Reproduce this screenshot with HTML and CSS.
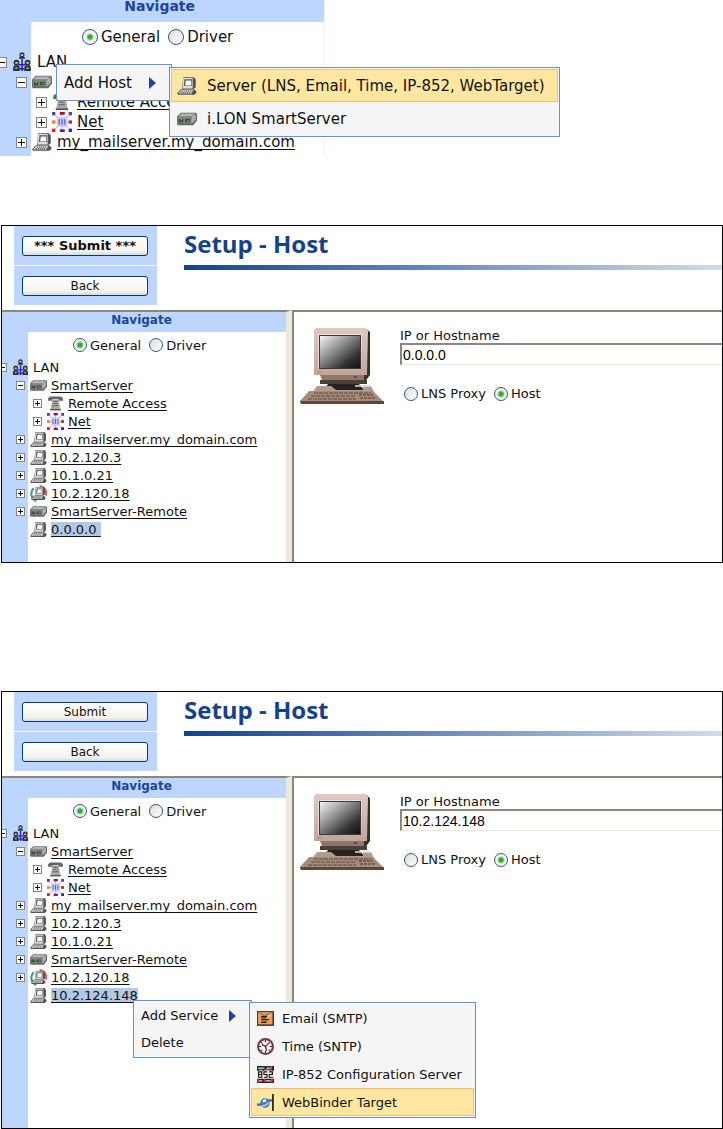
FILE: index.html
```
<!DOCTYPE html>
<html lang="en">
<head>
  <meta charset="UTF-8">
  <meta name="viewport" content="width=device-width, initial-scale=1.0">
  <title>Setup - Host</title>
  <link rel="stylesheet" href="styles.css">
</head>
<body>
  <!-- shared icons -->
  <svg class="sprite" aria-hidden="true">
    <defs>
      <linearGradient id="screen" x1="0" y1="0" x2="1" y2="1">
        <stop offset="0" stop-color="#f4f4f4"/>
        <stop offset="0.3" stop-color="#aaa"/>
        <stop offset="0.75" stop-color="#333"/>
        <stop offset="1" stop-color="#111"/>
      </linearGradient>
      <linearGradient id="bezel" x1="0" y1="0" x2="0" y2="1">
        <stop offset="0" stop-color="#dfcabf"/>
        <stop offset="1" stop-color="#bfa698"/>
      </linearGradient>
    </defs>
    <symbol id="lan" viewBox="0 0 16 18">
      <g fill="#333">
        <circle cx="8" cy="2.5" r="2.3"/><path d="M5 6l1-2h4l1 2z"/>
        <circle cx="3" cy="9.500" r="2.600"/><path d="M0 17v-3l1-2h4l1 2v3z"/>
        <circle cx="13" cy="9.500" r="2.600"/><path d="M10 17v-3l1-2h4l1 2v3z"/>
      </g>
      <path d="M8 6v11M5 11.500h6M6 15h4" stroke="#1a1aff" stroke-width="1.400"/>
      <g fill="#ddd"><rect x="7" y="2" width="2" height="1.500"/><rect x="2" y="9" width="2" height="1.500"/><rect x="12" y="9" width="2" height="1.500"/><rect x="2" y="14" width="2" height="1"/><rect x="12" y="14" width="2" height="1"/></g>
    </symbol>
    <symbol id="server" viewBox="0 0 16 16">
      <path d="M0 6l3-3h12l1 1v5l-3 4H1l-1-1z" fill="#666"/>
      <path d="M1 6l2.500-2.500h11L12 6z" fill="#b4b4b4"/>
      <path d="M.5 6.500H11v5H.5z" fill="#7f857f"/>
      <path d="M11.500 6.500L15 4v4.500l-3.500 3.500z" fill="#b0b0b0"/>
      <path d="M1.500 8H5v2.500H1.500zM6.500 8H10v2.500H6.500z" fill="#2f4f2f"/>
      <path d="M3 8h1v1H3zM8 9h1v1H8z" fill="#7bd07b"/>
    </symbol>
    <symbol id="pc" viewBox="0 0 16 16">
      <path d="M5 1h8.500L15 2.500V9l-2 1.500H4z" fill="#555"/>
      <path d="M5 1.500h7.500v8.500H4.500z" fill="#ddd"/>
      <path d="M6 2.500h6V8H5.500z" fill="#555"/>
      <path d="M7 3.500h4.500v4H6.500z" fill="#f8f8f8"/>
      <path d="M3 10.500h10.500L15.500 12v1.500L14 15H1l-1-1z" fill="#555"/>
      <path d="M3.500 11H13l-1.500 3H1z" fill="#d5d5d5"/>
      <path d="M4 12h7.500M3 13.300h8" stroke="#555" stroke-width=".8" stroke-dasharray="1 .6"/>
    </symbol>
    <symbol id="pc-remote" viewBox="0 0 16 16">
      <path d="M9 1a7 7 0 0 1 6 9" stroke="#ee4b4b" stroke-width="2" fill="none"/>
      <path d="M3.500 3A7.200 7.200 0 0 0 6 15" stroke="#3a9c8c" stroke-width="2" fill="none"/>
      <use href="#pc" x="1" y="1" width="14" height="14"/>
    </symbol>
    <symbol id="phone" viewBox="0 0 16 16">
      <path d="M1 5.500V3l2-1.500h10L15 3v2.500h-4V4H5v1.500z" fill="#666"/>
      <path d="M5 4.500h6l1.500 8.500h-9z" fill="#aaa"/>
      <path d="M6 6h4M6 8h4M5.500 10h5" stroke="#555" stroke-width="1" stroke-dasharray="1 .5"/>
      <path d="M3 13h10v1.500H3z" fill="#555"/>
    </symbol>
    <symbol id="net" viewBox="0 0 18 18">
      <path d="M3 3l12 12M15 3L3 15M9 2v14M2 9h14" stroke="#bbb"/>
      <rect x="4.500" y="4.500" width="9" height="9" rx="2" fill="#c9c9f6"/>
      <path d="M6.500 6.500v5M9 6.500v5M11.500 6.500v5" stroke="#5555ee"/>
      <path d="M0 0h3v3H0z" fill="#5a3ab0"/><path d="M7 0h4.500v2.500H7z" fill="#a0104a"/>
      <path d="M15 0h3v3h-3z" fill="#5a3ad0"/><path d="M0 7.500h3v3H0z" fill="#f08040"/>
      <path d="M15 7.500h3v3h-3z" fill="#d0204a"/><path d="M0 15h3v3H0z" fill="#e02020"/>
      <path d="M7 15.500h4.500V18H7z" fill="#6a20a0"/><path d="M15 15h3v3h-3z" fill="#2222dd"/>
    </symbol>
    <symbol id="email" viewBox="0 0 16 16">
      <path d="M0 1h16v14H0z" fill="#4a3a2c"/>
      <path d="M1 2h13.500v11.500H1z" fill="#eb9c50"/>
      <path d="M1 2l6 3.500L14.500 2" stroke="#777" fill="none"/>
      <path d="M4 6.500h6M4 9h7M4 11.500h5" stroke="#222" stroke-width="1.500"/>
      <path d="M9 8l4-4" stroke="#fbc88b" stroke-width="1.500"/>
    </symbol>
    <symbol id="clock" viewBox="0 0 16 16">
      <circle cx="8" cy="8" r="7" fill="#fff" stroke="#713a50" stroke-width="2"/>
      <path d="M8 2v2M8 12v2M2 8h2M12 8h2M4 4l1 1M11 11l1 1M4 12l1-1" stroke="#222"/>
      <path d="M4.500 6L8 8l1 4" stroke="#222" stroke-width="1.200" fill="none"/>
      <path d="M8 8l4-4" stroke="#e02020" stroke-width="1.500"/>
    </symbol>
    <symbol id="ip852" viewBox="0 0 16 16">
      <path d="M0 0h16v16H0z" fill="#222"/>
      <path d="M1 2h6M9 2h4M2 4h3M7 4h5M1 14h4M8 14h5" stroke="#ddd"/>
      <path d="M13.500 0v5M1 11.500v4M14 11v5M7 12v3" stroke="#dd3030" stroke-width="1.500"/>
      <path d="M0 4.500h16v7.500H0z" fill="#eee"/>
      <path d="M1.500 5.500h3v5h-3zM1.500 8h3M9.500 5.500h-3V8h3v2.500h-3M11.500 5.500h3V8h-3v2.500H15" stroke="#111" fill="none"/>
    </symbol>
    <symbol id="target" viewBox="0 0 16 16">
      <path d="M0 10h4M10 6h5" stroke="#3a6b99" stroke-width="2"/>
      <circle cx="7.500" cy="8.500" r="4.500" fill="#3a78c8"/>
      <path d="M5 6l3-1.500L9 7 6 8z" fill="#dff0ff"/>
      <path d="M4 11q4 1 7-3" stroke="#a8c8ea" stroke-width="1.500" fill="none"/>
      <path d="M15 0v16" stroke="#111" stroke-width="1.500"/>
    </symbol>
    <symbol id="computer" viewBox="0 0 84 76">
      <path d="M66 1l4 3v43l-6 8H22v-6l44-3z" fill="#33302c"/>
      <path d="M14 2l2-2h49l3 3-1 44H14z" fill="url(#bezel)"/>
      <path d="M18 6h44l-1 35H18z" fill="#eee2dc"/>
      <path d="M19 7h42v34H19z" fill="#3b3b3b"/>
      <path d="M20 8h40v32H20z" fill="url(#screen)"/>
      <path d="M18 44h4" stroke="#a08070"/>
      <path d="M20 47h44v5H22z" fill="#8d786b"/>
      <path d="M20 52h47v4H20z" fill="#4b4038"/>
      <path d="M54 49h3" stroke="#222"/>
      <path d="M28 56h31l5 6H24z" fill="#26221f"/>
      <path d="M17 58h14l5 4h27v-4h8l4 8H11z" fill="#b39b8b"/>
      <path d="M9 63h64l11 11-1 2H1l-1-3z" fill="#a58b7a"/>
      <path d="M0 73h84v3H1z" fill="#59493e"/>
      <path d="M14 65h57M11 68h44M8 71h48" stroke="#59483c" stroke-width="1" stroke-dasharray="4 1"/>
      <path d="M59 67h14M60 70h16" stroke="#65513f" stroke-width="1.500" stroke-dasharray="3 1"/>
      <path d="M55 58h16" stroke="#ddd" stroke-width="1.500"/>
    </symbol>
  </svg>

  <section class="snippet">
    <div class="nav-title">Navigate</div>
    <div class="nav-body">
      <div class="view-switch">
        <label><input type="radio" name="view1" checked>General</label>
        <label><input type="radio" name="view1">Driver</label>
      </div>
      <ul class="tree">
        <li class="root"><button class="toggle minus" aria-label="Collapse"></button><svg><use href="#lan"/></svg><span>LAN</span></li>
        <li><button class="toggle minus" aria-label="Collapse"></button><svg><use href="#server"/></svg></li>
        <li class="sub"><button class="toggle" aria-label="Expand"></button><svg><use href="#phone"/></svg><a href="#">Remote Access</a></li>
        <li class="sub"><button class="toggle" aria-label="Expand"></button><svg><use href="#net"/></svg><a href="#">Net</a></li>
        <li><button class="toggle" aria-label="Expand"></button><svg><use href="#pc"/></svg><a href="#">my_mailserver.my_domain.com</a></li>
      </ul>
    </div>
    <div class="menu host-menu">
      <button class="menu-item">Add Host<i class="arrow"></i></button>
    </div>
    <div class="menu host-submenu">
      <button class="menu-item active"><svg><use href="#pc"/></svg>Server (LNS, Email, Time, IP-852, WebTarget)</button>
      <button class="menu-item"><svg><use href="#server"/></svg>i.LON SmartServer</button>
    </div>
  </section>

  <section class="window">
    <header class="top">
      <div class="actions">
        <div class="cell"><button class="btn changed">*** Submit ***</button></div>
        <div class="cell"><button class="btn">Back</button></div>
      </div>
      <div class="heading"><h1>Setup - Host</h1></div>
    </header>
    <div class="frames">
      <nav class="sidebar">
        <div class="nav-title">Navigate</div>
        <div class="nav-body">
          <div class="view-switch">
            <label><input type="radio" name="view2" checked>General</label>
            <label><input type="radio" name="view2">Driver</label>
          </div>
          <ul class="tree">
            <li class="root"><button class="toggle minus" aria-label="Collapse"></button><svg><use href="#lan"/></svg><span>LAN</span></li>
            <li><button class="toggle minus" aria-label="Collapse"></button><svg><use href="#server"/></svg><a href="#">SmartServer</a></li>
            <li class="sub"><button class="toggle" aria-label="Expand"></button><svg><use href="#phone"/></svg><a href="#">Remote Access</a></li>
            <li class="sub"><button class="toggle" aria-label="Expand"></button><svg><use href="#net"/></svg><a href="#">Net</a></li>
            <li><button class="toggle" aria-label="Expand"></button><svg><use href="#pc"/></svg><a href="#">my_mailserver.my_domain.com</a></li>
            <li><button class="toggle" aria-label="Expand"></button><svg><use href="#pc"/></svg><a href="#">10.2.120.3</a></li>
            <li><button class="toggle" aria-label="Expand"></button><svg><use href="#pc"/></svg><a href="#">10.1.0.21</a></li>
            <li><button class="toggle" aria-label="Expand"></button><svg><use href="#pc-remote"/></svg><a href="#">10.2.120.18</a></li>
            <li><button class="toggle" aria-label="Expand"></button><svg><use href="#server"/></svg><a href="#">SmartServer-Remote</a></li>
            <li class="leaf"><svg><use href="#pc"/></svg><a class="selected" href="#">0.0.0.0&nbsp;</a></li>
          </ul>
        </div>
      </nav>
      <main class="content">
        <svg class="computer"><use href="#computer"/></svg>
        <form class="host-form">
          <label for="host1">IP or Hostname</label>
          <input type="text" id="host1" value="0.0.0.0">
          <div class="kind">
            <label><input type="radio" name="kind1">LNS Proxy</label>
            <label><input type="radio" name="kind1" checked>Host</label>
          </div>
        </form>
      </main>
    </div>
  </section>

  <section class="window last">
    <header class="top">
      <div class="actions">
        <div class="cell"><button class="btn">Submit</button></div>
        <div class="cell"><button class="btn">Back</button></div>
      </div>
      <div class="heading"><h1>Setup - Host</h1></div>
    </header>
    <div class="frames">
      <nav class="sidebar">
        <div class="nav-title">Navigate</div>
        <div class="nav-body">
          <div class="view-switch">
            <label><input type="radio" name="view3" checked>General</label>
            <label><input type="radio" name="view3">Driver</label>
          </div>
          <ul class="tree">
            <li class="root"><button class="toggle minus" aria-label="Collapse"></button><svg><use href="#lan"/></svg><span>LAN</span></li>
            <li><button class="toggle minus" aria-label="Collapse"></button><svg><use href="#server"/></svg><a href="#">SmartServer</a></li>
            <li class="sub"><button class="toggle" aria-label="Expand"></button><svg><use href="#phone"/></svg><a href="#">Remote Access</a></li>
            <li class="sub"><button class="toggle" aria-label="Expand"></button><svg><use href="#net"/></svg><a href="#">Net</a></li>
            <li><button class="toggle" aria-label="Expand"></button><svg><use href="#pc"/></svg><a href="#">my_mailserver.my_domain.com</a></li>
            <li><button class="toggle" aria-label="Expand"></button><svg><use href="#pc"/></svg><a href="#">10.2.120.3</a></li>
            <li><button class="toggle" aria-label="Expand"></button><svg><use href="#pc"/></svg><a href="#">10.1.0.21</a></li>
            <li><button class="toggle" aria-label="Expand"></button><svg><use href="#server"/></svg><a href="#">SmartServer-Remote</a></li>
            <li><button class="toggle" aria-label="Expand"></button><svg><use href="#pc-remote"/></svg><a href="#">10.2.120.18</a></li>
            <li class="leaf"><svg><use href="#pc"/></svg><a class="selected" href="#">10.2.124.148</a></li>
          </ul>
        </div>
      </nav>
      <main class="content">
        <svg class="computer"><use href="#computer"/></svg>
        <form class="host-form">
          <label for="host2">IP or Hostname</label>
          <input type="text" id="host2" value="10.2.124.148">
          <div class="kind">
            <label><input type="radio" name="kind2">LNS Proxy</label>
            <label><input type="radio" name="kind2" checked>Host</label>
          </div>
        </form>
      </main>
    </div>
    <div class="menu service-menu">
      <button class="menu-item">Add Service<i class="arrow"></i></button>
      <button class="menu-item">Delete</button>
    </div>
    <div class="menu service-submenu">
      <button class="menu-item"><svg><use href="#email"/></svg>Email (SMTP)</button>
      <button class="menu-item"><svg><use href="#clock"/></svg>Time (SNTP)</button>
      <button class="menu-item"><svg><use href="#ip852"/></svg>IP-852 Configuration Server</button>
      <button class="menu-item active"><svg><use href="#target"/></svg>WebBinder Target</button>
    </div>
  </section>
</body>
</html>
```
FILE: styles.css
```
* {
  box-sizing: border-box;
}
body {
  margin: 0;
  background: #fff;
  color: #111;
  font-family: Verdana, "DejaVu Sans", sans-serif;
  font-size: 13px;
}
button {
  font-family: inherit;
  color: inherit;
}
.sprite {
  position: absolute;
  width: 0;
  height: 0;
}

/* navigation tree */
.nav-title {
  height: 20px;
  padding-right: 5px;
  background: #bdd6ff;
  color: #1b459a;
  font-size: 12px;
  font-weight: bold;
  line-height: 16px;
  text-align: center;
}
.nav-body {
  background: linear-gradient(to right, #bdd6ff 26px, #fff 26px);
}
.view-switch {
  display: flex;
  align-items: center;
  gap: 8px;
  height: 26px;
  padding-left: 71px;
}
.view-switch label,
.kind label {
  display: flex;
  align-items: center;
  gap: 3px;
  white-space: nowrap;
}
input[type="radio"] {
  appearance: none;
  width: 14px;
  height: 14px;
  margin: 0;
  border: 1px solid #2b5a87;
  border-radius: 50%;
  background: linear-gradient(135deg, #dcdcd7, #fff);
}
input[type="radio"]:checked {
  background: radial-gradient(circle, #21a121 0, #35b835 2px, #f4f4f0 4px);
}
.tree {
  list-style: none;
  margin: 0;
  padding: 0 0 24px;
}
.tree li {
  display: flex;
  align-items: center;
  gap: 4px;
  height: 18px;
  padding-left: 14px;
  white-space: nowrap;
}
.tree .root {
  padding-left: 0;
  margin-left: -4px;
}
.tree .sub {
  padding-left: 31px;
}
.tree .leaf {
  padding-left: 28px;
}
.tree svg {
  flex: none;
  width: 17px;
  height: 17px;
}
.tree a {
  color: #111;
  text-decoration: underline;
  text-decoration-skip-ink: none;
  text-underline-offset: 2px;
}
.tree .selected {
  background: #b3c7e7;
}
.toggle {
  flex: none;
  width: 9px;
  height: 9px;
  margin-right: 1px;
  padding: 0;
  border: 1px solid #848484;
  background:
    linear-gradient(#111, #111) center / 5px 1px no-repeat,
    linear-gradient(#111, #111) center / 1px 5px no-repeat,
    #fff;
}
.toggle.minus {
  background: linear-gradient(#111, #111) center / 5px 1px no-repeat, #fff;
}

/* context menus */
.menu {
  position: absolute;
  padding: 1px;
  border: 1px solid #6593cf;
  background: #f5f5f5;
}
.menu-item {
  display: flex;
  align-items: center;
  gap: 8px;
  width: 100%;
  height: 28px;
  padding: 0 5px;
  border: 1px solid transparent;
  background: none;
  font-size: 13px;
  white-space: nowrap;
}
.menu-item svg {
  flex: none;
  width: 17px;
  height: 17px;
}
.menu-item.active {
  border-color: #ffbd69;
  background: #ffe7a2;
}
.arrow {
  margin: 0 8px 0 auto;
  border: 6px solid transparent;
  border-left: 7px solid #1b459a;
  border-right: 0;
}

/* navigation fragment on its own */
.snippet {
  position: relative;
  width: 45%;
  margin-bottom: 69px;
  border-right: 1px solid #f3efe4;
  font-size: 15px;
}
.snippet .nav-title {
  height: 22px;
  font-size: 14px;
  line-height: 12px;
}
.snippet .nav-body {
  background: linear-gradient(to right, #bdd6ff 31px, #fff 31px);
}
.snippet .view-switch {
  height: 30px;
  padding-left: 82px;
}
.snippet input[type="radio"] {
  width: 16px;
  height: 16px;
}
.snippet .tree {
  padding-bottom: 4px;
}
.snippet .tree li {
  gap: 5px;
  height: 20px;
  padding-left: 16px;
}
.snippet .tree .root {
  padding-left: 0;
  margin-left: -4px;
}
.snippet .tree .sub {
  padding-left: 36px;
}
.snippet .tree svg {
  width: 20px;
  height: 20px;
}
.snippet .toggle {
  width: 11px;
  height: 11px;
  margin-right: 0;
  background-size: 7px 1px, 1px 7px, auto;
}
.snippet .toggle.minus {
  background-size: 7px 1px, auto;
}
.snippet .menu-item {
  gap: 10px;
  height: 33px;
  font-size: 15px;
}
.snippet .menu-item svg {
  width: 20px;
  height: 20px;
}
.host-menu {
  left: 56px;
  top: 64px;
  width: 116px;
}
.host-submenu {
  left: 169px;
  top: 67px;
  width: 391px;
}

/* setup windows */
.window {
  position: relative;
  margin: 0 0 128px 1px;
  border: 1px solid #000;
}
.window.last {
  margin-bottom: 0;
}
.top {
  display: flex;
  height: 84px;
}
.actions {
  display: flex;
  flex-direction: column;
  gap: 1px;
  width: 143px;
  margin-left: 12px;
}
.cell {
  height: 39px;
  padding: 10px 9px 10px 8px;
  background: #bdd6ff;
}
.btn {
  display: block;
  width: 100%;
  height: 20px;
  padding: 0;
  border: 1px solid #003c74;
  border-radius: 3px;
  background: linear-gradient(#fff, #f4f3ee 80%, #dcd8cc);
  font-size: 12px;
  line-height: 16px;
}
.btn.changed {
  font-size: 13px;
  font-weight: bold;
}
.heading {
  flex: 1;
  margin-left: 27px;
}
.heading h1 {
  margin: 0;
  padding-bottom: 3px;
  border-bottom: 5px solid;
  border-image: linear-gradient(to right, #11418f, #d3ddea) 1;
  color: #15428b;
  font-family: "Trebuchet MS", "Open Sans", sans-serif;
  font-size: 24px;
  font-weight: 700;
  line-height: 36px;
}
.frames {
  display: flex;
}
.sidebar {
  flex: none;
  width: 290px;
  overflow: hidden;
  border-top: 2px solid #8b8879;
  border-right: 6px solid #ece9d8;
}
.content {
  display: flex;
  flex: 1;
  align-items: flex-start;
  gap: 16px;
  min-width: 0;
  padding: 16px 0 0 6px;
  border-top: 2px solid #8b8879;
  border-left: 2px solid #8b8879;
}
.computer {
  flex: none;
  width: 84px;
  height: 76px;
}
.host-form {
  flex: 1;
  min-width: 0;
}
.host-form > label {
  display: block;
  line-height: 15px;
}
.host-form input[type="text"] {
  display: block;
  width: 100%;
  height: 22px;
  padding: 1px;
  border: 2px solid #8b8879;
  border-right: 0;
  border-bottom: 1px solid #ece9d8;
  font-family: Arial, "Liberation Sans", sans-serif;
  font-size: 14px;
}
.kind {
  display: flex;
  gap: 8px;
  margin-top: 21px;
  padding-left: 4px;
}
.last .tree {
  padding-bottom: 124px;
}
.service-menu {
  left: 131px;
  top: 308px;
  width: 119px;
}
.service-menu .menu-item {
  height: 27px;
}
.service-submenu {
  left: 247px;
  top: 310px;
  width: 227px;
}
```
